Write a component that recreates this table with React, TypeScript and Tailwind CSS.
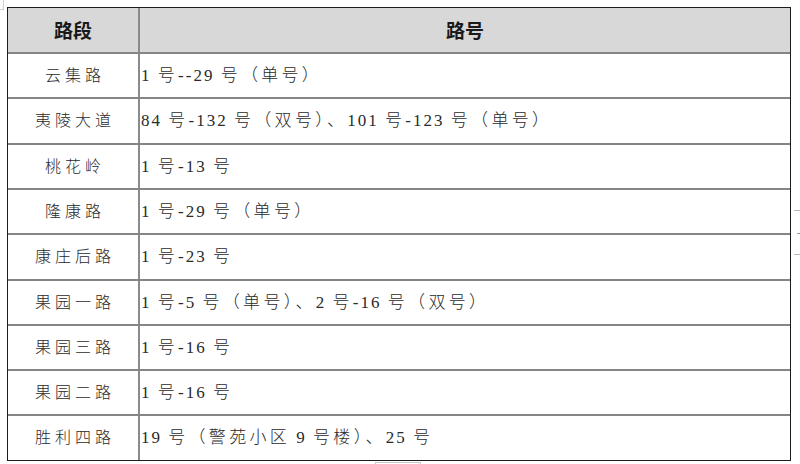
import React from "react";

const rows: { name: string; num: string; h: string }[] = [
  { name: "云集路", num: "1 号--29 号（单号）", h: "h-[45px]" },
  { name: "夷陵大道", num: "84 号-132 号（双号）、101 号-123 号（单号）", h: "h-[46px]" },
  { name: "桃花岭", num: "1 号-13 号", h: "h-[45px]" },
  { name: "隆康路", num: "1 号-29 号（单号）", h: "h-[45px]" },
  { name: "康庄后路", num: "1 号-23 号", h: "h-[46px]" },
  { name: "果园一路", num: "1 号-5 号（单号）、2 号-16 号（双号）", h: "h-[45px]" },
  { name: "果园三路", num: "1 号-16 号", h: "h-[45px]" },
  { name: "果园二路", num: "1 号-16 号", h: "h-[45px]" },
  { name: "胜利四路", num: "19 号（警苑小区 9 号楼）、25 号", h: "h-[46px]" },
];

function Mixed({ text }: { text: string }) {
  const parts = text.match(/[\x00-\x7f]+|[^\x00-\x7f]+/g) || [];
  return (
    <>
      {parts.map((p, i) =>
        /[^\x00-\x7f]/.test(p) ? (
          <span key={i} className="tracking-[3.3px]">
            {p}
          </span>
        ) : (
          <span key={i} className="tracking-[2px]">
            {p}
          </span>
        )
      )}
    </>
  );
}

export default function App() {
  return (
    <div className="relative w-[800px] h-[464px] bg-white overflow-hidden">
      <div className="pt-[7px] pl-[7px]">
        <div className="w-[784px] border border-[#1c1c1c] flex flex-col">
          <div className="grid grid-cols-[132px_1fr] h-[44px] bg-[#d8d8d8]">
            <div className="border-r-2 border-[#8a8a8a] flex items-center justify-center text-[19px] font-bold text-[#1a1a1a] [font-family:'Noto_Sans_CJK_SC',sans-serif]">
              路段
            </div>
            <div className="flex items-center justify-center text-[19px] font-bold text-[#1a1a1a] [font-family:'Noto_Sans_CJK_SC',sans-serif]">
              路号
            </div>
          </div>
          {rows.map((r) => (
            <div
              key={r.name + r.num}
              className={`grid grid-cols-[132px_1fr] ${r.h} border-t-2 border-[#858585]`}
            >
              <div className="border-r-2 border-[#8a8a8a] flex items-center justify-center text-[16px] tracking-[4px] pl-[4px] text-[#2a2a2a] font-light [font-family:'Liberation_Serif','Noto_Sans_CJK_SC',serif]">
                {r.name}
              </div>
              <div className="flex items-center pl-[1px] text-[17px] text-[#2a2a2a] font-light whitespace-pre [font-family:'Liberation_Serif','Noto_Sans_CJK_SC',serif]">
                <span>
                  <Mixed text={r.num} />
                </span>
              </div>
            </div>
          ))}
        </div>
      </div>
      <div className="absolute left-0 top-0 w-[4px] h-[10px] border-r border-b border-[#cfcfcf]" />
      <div className="absolute right-0 top-[210px] w-[6px] h-[1px] bg-[#bdbdbd]" />
      <div className="absolute right-0 top-[233px] w-[3px] h-[1px] bg-[#9a9a9a]" />
      <div className="absolute right-0 top-[254px] w-[6px] h-[1px] bg-[#bdbdbd]" />
      <div className="absolute left-[375px] top-[462px] w-[46px] h-[4px] border border-[#c8c8c8]" />
    </div>
  );
}
